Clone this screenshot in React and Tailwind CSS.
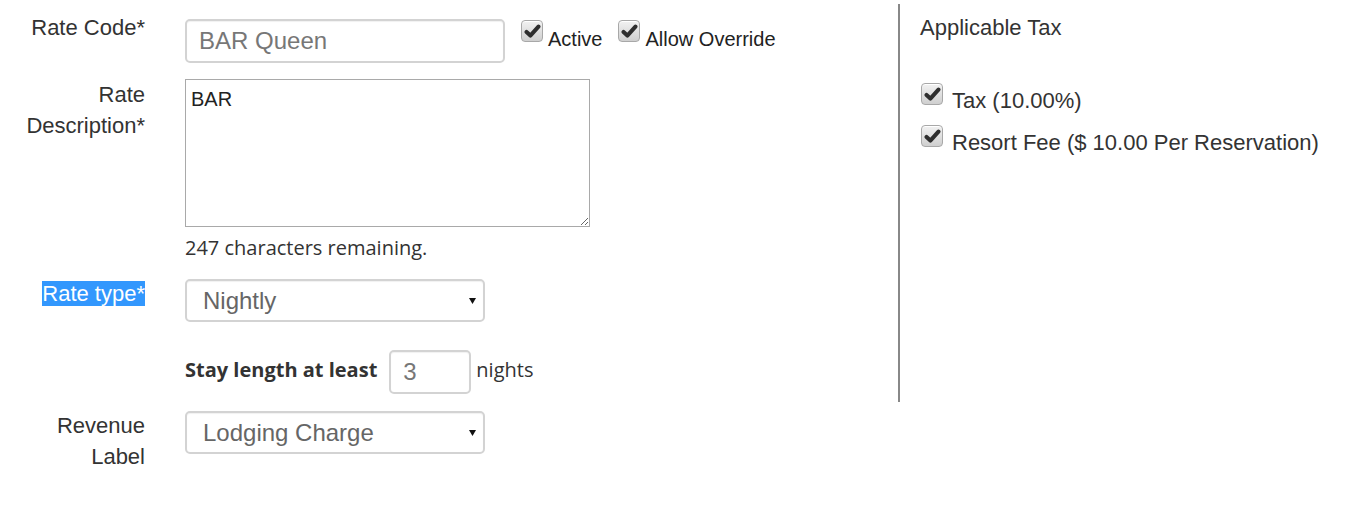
import React from 'react';

function Check({ className = '' }) {
  return (
    <span
      className={`inline-flex w-[22px] h-[22px] shrink-0 items-center justify-center rounded-[4px] border border-[#a8a8a8] bg-linear-to-b from-[#f2f2f2] to-[#cfcfcf] shadow-[inset_0_1px_0_#ffffff] ${className}`}
    >
      <svg viewBox="0 0 16 16" className="w-[17px] h-[17px]">
        <path
          d="M2.4 8.4 L6 11.8 L13.6 3.4"
          fill="none"
          stroke="#2e2e2e"
          strokeWidth="3.8"
          strokeLinecap="round"
          strokeLinejoin="round"
        />
      </svg>
    </span>
  );
}

function Caret() {
  return (
    <svg viewBox="0 0 7 6" className="w-[7px] h-[6px]">
      <path d="M0 0 H7 L3.5 6 Z" fill="#111" />
    </svg>
  );
}

function SelectBox({ value }) {
  return (
    <div className="w-[300px] h-[43px] flex items-center justify-between pl-[16px] pr-[7px] border-2 border-[#d3d3d3] rounded-[5px] bg-white shadow-[inset_0_1px_1px_rgba(0,0,0,0.06)] text-[24px] text-[#666]">
      <span>{value}</span>
      <Caret />
    </div>
  );
}

export default function App() {
  return (
    <div className="w-[1359px] h-[528px] bg-white flex text-[#333] font-['Liberation_Sans',Arial,sans-serif]">
      {/* left form */}
      <div className="w-[898px] shrink-0 flex flex-col">
        {/* Rate code */}
        <div className="flex items-start mt-[12px]">
          <div className="w-[145px] pt-[1px] text-right text-[22px] leading-[30px]">Rate Code*</div>
          <div className="ml-[40px] mt-[7px] flex items-start">
            <div className="w-[320px] h-[44px] flex items-center pl-[12px] border-2 border-[#d3d3d3] rounded-[5px] shadow-[inset_0_1px_1px_rgba(0,0,0,0.06)] text-[24px] text-[#777]">
              BAR Queen
            </div>
            <div className="ml-[16px] mt-[1px] flex items-start">
              <Check />
              <span className="ml-[5px] mt-[7px] text-[20px] leading-[24px] text-[#222]">Active</span>
            </div>
            <div className="ml-[16px] mt-[1px] flex items-start">
              <Check />
              <span className="ml-[5px] mt-[7px] text-[20px] leading-[24px] text-[#222]">Allow Override</span>
            </div>
          </div>
        </div>

        {/* Rate description */}
        <div className="flex items-start mt-[16px]">
          <div className="w-[145px] text-right text-[22px] leading-[31px]">
            Rate
            <br />
            Description*
          </div>
          <div className="ml-[40px] flex flex-col">
            <textarea
              readOnly
              defaultValue="BAR"
              className="block w-[405px] h-[148px] border border-[#a9a9a9] pt-[7px] pl-[5px] pr-[5px] text-[20px] leading-[24px] text-[#222] resize outline-none font-['Liberation_Sans',Arial,sans-serif]"
            />
            <div className="mt-[7px] text-[20px] leading-[28px] text-[#333] font-['Open_Sans',sans-serif]">
              247 characters remaining.
            </div>
          </div>
        </div>

        {/* Rate type */}
        <div className="flex items-start mt-[17px]">
          <div className="w-[145px] text-right text-[22px] leading-[30px]">
            <span className="bg-[#3297fd] text-white">Rate type*</span>
          </div>
          <div className="ml-[40px]">
            <SelectBox value="Nightly" />
          </div>
        </div>

        {/* Stay length */}
        <div className="flex items-center mt-[28px] ml-[185px]">
          <span className="pb-[4px] text-[20px] font-bold text-[#333] font-['Open_Sans',sans-serif]">Stay length at least</span>
          <div className="ml-[12px] w-[82px] h-[44px] flex items-center pl-[12px] border-2 border-[#d3d3d3] rounded-[5px] shadow-[inset_0_1px_1px_rgba(0,0,0,0.06)] text-[24px] text-[#777]">
            3
          </div>
          <span className="pb-[4px] ml-[5px] text-[20px] text-[#333] font-['Open_Sans',sans-serif]">nights</span>
        </div>

        {/* Revenue label */}
        <div className="flex items-start mt-[17px]">
          <div className="w-[145px] -mt-[1px] text-right text-[22px] leading-[31px]">
            Revenue
            <br />
            Label
          </div>
          <div className="ml-[40px]">
            <SelectBox value="Lodging Charge" />
          </div>
        </div>
      </div>

      {/* divider */}
      <div className="mt-[4px] w-[2px] h-[398px] bg-[#888]" />

      {/* right panel */}
      <div className="pl-[20px] flex flex-col">
        <div className="mt-[13px] text-[22px] leading-[30px]">Applicable Tax</div>
        <div className="mt-[40px] ml-[1px] flex items-start">
          <Check />
          <span className="ml-[9px] mt-[3px] text-[22px] leading-[30px]">Tax (10.00%)</span>
        </div>
        <div className="mt-[9px] ml-[1px] flex items-start">
          <Check />
          <span className="ml-[9px] mt-[3px] text-[22px] leading-[30px]">Resort Fee ($ 10.00 Per Reservation)</span>
        </div>
      </div>
    </div>
  );
}
